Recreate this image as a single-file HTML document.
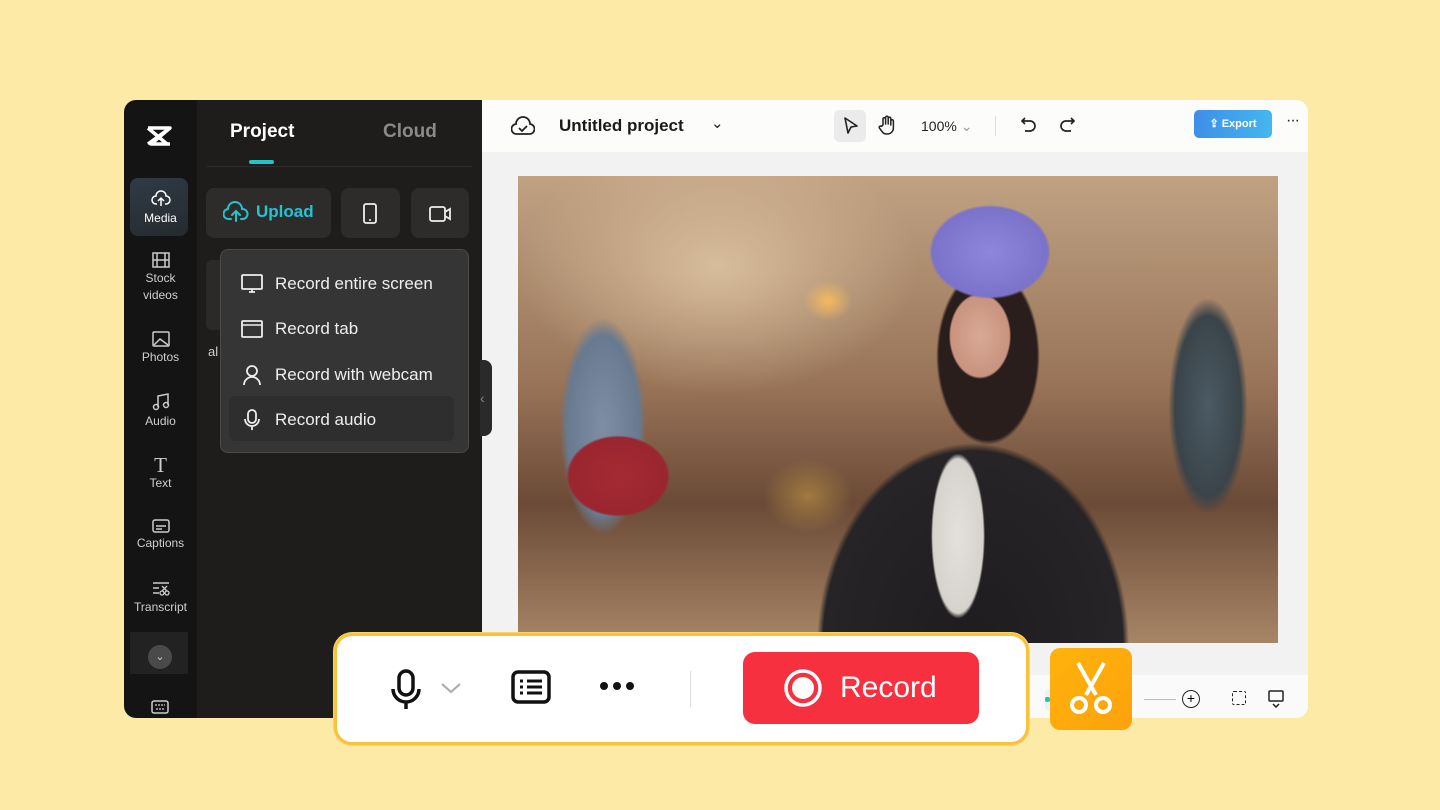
<!DOCTYPE html>
<html><head><meta charset="utf-8"><style>
*{box-sizing:border-box;margin:0;padding:0}
body{width:1440px;height:810px;background:#fdeaa7;font-family:"Liberation Sans",sans-serif;position:relative;overflow:hidden}
.abs{position:absolute}
.win{left:124px;top:100px;width:1184px;height:618px;border-radius:12px;overflow:hidden;background:#f2f2f2;z-index:0}
.rail{left:0;top:0;width:73px;height:618px;background:#141414;z-index:2}
.panel{left:73px;top:0;width:285px;height:618px;background:#1e1d1c;z-index:2}
.ri{position:absolute;left:0;width:73px;text-align:center;color:#cfcfcf;font-size:12px;line-height:17px}
.ri svg{display:block;margin:0 auto 2px}
.menu{left:96px;top:149px;width:249px;height:204px;background:#363535;border:1px solid #4a4a4a;border-radius:8px;z-index:3}
.mi{position:absolute;left:20px;color:#eee;font-size:17px;display:flex;align-items:center;gap:12px}
.btn{position:absolute;top:88px;height:50px;background:#2d2c2b;border-radius:8px}
.top{left:358px;top:0;width:826px;height:52px;background:#fcfcfb}
.photo{left:394px;top:76px;width:760px;height:467px;overflow:hidden;
background:
radial-gradient(ellipse 80px 62px at 472px 76px,#8c86dc 0,#7b73c9 72%,transparent 76%),
radial-gradient(ellipse 42px 58px at 462px 160px,#d9a995 0,#c8937f 70%,transparent 74%),
radial-gradient(ellipse 70px 120px at 470px 180px,#2a1e1c 0,#2a1e1c 70%,transparent 74%),
radial-gradient(ellipse 36px 110px at 440px 360px,#e4e0db 0,#d6d2cc 70%,transparent 75%),
radial-gradient(ellipse 200px 260px at 455px 470px,#1e1c1e 0,#262426 75%,transparent 78%),
radial-gradient(ellipse 70px 55px at 100px 300px,#a42a32 0,#9a2630 70%,transparent 74%),
radial-gradient(ellipse 60px 150px at 85px 250px,#7d8ea5 0,#687a90 60%,transparent 72%),
radial-gradient(ellipse 55px 150px at 690px 230px,#4b5a64 0,#3a444a 60%,transparent 72%),
radial-gradient(ellipse 60px 50px at 290px 320px,#a07a40 0,transparent 75%),
radial-gradient(ellipse 30px 25px at 310px 125px,#f4b95c 0,transparent 80%),
radial-gradient(ellipse 250px 160px at 200px 90px,#d7bd9c 0,transparent 80%),
linear-gradient(180deg,#c0a283 0%,#987357 45%,#6b4a37 70%,#a78566 100%)}
.bar{left:334px;top:633px;width:695px;height:112px;background:#fff;border:3px solid #f9c23c;border-radius:18px;box-shadow:0 0 0 1px #fbd56a;z-index:5}
</style></head><body>
<div class="abs win">
 <div class="abs rail">
  <svg class="abs" style="left:21px;top:24px" width="28" height="24" viewBox="0 0 28 24"><path d="M3 4h22L6 20h19M3 4l19 16M25 4L3 20" stroke="#fff" stroke-width="3.5" fill="none" stroke-linejoin="round"/></svg>
  <div class="abs" style="left:6px;top:78px;width:58px;height:58px;border-radius:8px;background:linear-gradient(160deg,#2f3b46,#262a2e)"></div>
  <div class="ri" style="top:90px;color:#fff"><svg width="20" height="18" viewBox="0 0 20 18"><path d="M6 14H5a4 4 0 0 1 0-8 5 5 0 0 1 10 0 4 4 0 0 1 0 8h-1M10 16V8M7 11l3-3 3 3" stroke="#fff" stroke-width="1.5" fill="none"/></svg>Media</div>
  <div class="ri" style="top:152px"><svg width="18" height="16"><rect x="1" y="1" width="16" height="14" stroke="#ccc" stroke-width="1.5" fill="none"/><path d="M5 1v14M13 1v14M1 8h16" stroke="#ccc" stroke-width="1.5"/></svg>Stock<br>videos</div>
  <div class="ri" style="top:231px"><svg width="18" height="16"><rect x="1" y="1" width="16" height="14" rx="1" stroke="#ccc" stroke-width="1.5" fill="none"/><path d="M2 14l6-6 8 6" stroke="#ccc" stroke-width="1.5" fill="none"/></svg>Photos</div>
  <div class="ri" style="top:293px"><svg width="18" height="18"><path d="M6 14V3l10-2v11" stroke="#ccc" stroke-width="1.5" fill="none"/><circle cx="4" cy="14" r="2.5" stroke="#ccc" stroke-width="1.5" fill="none"/><circle cx="14" cy="12" r="2.5" stroke="#ccc" stroke-width="1.5" fill="none"/></svg>Audio</div>
  <div class="ri" style="top:355px"><span style="font-family:'Liberation Serif';font-size:21px;display:block;line-height:20px">T</span>Text</div>
  <div class="ri" style="top:419px"><svg width="18" height="14"><rect x="1" y="1" width="16" height="12" rx="2" stroke="#ccc" stroke-width="1.5" fill="none"/><path d="M4 7h10M4 10h6" stroke="#ccc" stroke-width="1.5"/></svg>Captions</div>
  <div class="ri" style="top:481px"><svg width="18" height="16"><path d="M1 2h16M1 7h6M1 12h6" stroke="#ccc" stroke-width="1.5"/><circle cx="10" cy="12" r="2" stroke="#ccc" fill="none" stroke-width="1.3"/><circle cx="15" cy="12" r="2" stroke="#ccc" fill="none" stroke-width="1.3"/><path d="M10 5l5 5M15 5l-5 5" stroke="#ccc" stroke-width="1.3"/></svg>Transcript</div>
  <div class="abs" style="left:6px;top:532px;width:58px;height:42px;background:#222"></div>
  <div class="abs" style="left:24px;top:545px;width:24px;height:24px;border-radius:50%;background:#4a4a4a;color:#ccc;font-size:11px;text-align:center;line-height:24px">⌄</div>
  <svg class="abs" style="left:27px;top:600px" width="18" height="14"><rect x="1" y="1" width="16" height="12" rx="2" stroke="#ccc" stroke-width="1.5" fill="none"/><path d="M4 5h10M5 9h8" stroke="#ccc" stroke-width="1.3" stroke-dasharray="2 1"/></svg>
 </div>
 <div class="abs panel">
  <div class="abs" style="left:33px;top:21px;color:#fff;font-weight:bold;font-size:19px">Project</div>
  <div class="abs" style="left:186px;top:21px;color:#8a8a8a;font-weight:bold;font-size:19px">Cloud</div>
  <div class="abs" style="left:52px;top:60px;width:25px;height:4px;border-radius:2px;background:#22c4c9"></div>
  <div class="abs" style="left:10px;top:66px;width:265px;height:1px;background:#2e2e2e"></div>
  <div class="btn" style="left:9px;width:125px"><div style="display:flex;align-items:center;gap:7px;color:#24c3d1;font-weight:bold;font-size:17px;padding:13px 0 0 17px"><svg width="26" height="22" viewBox="0 0 26 22"><path d="M8 18H6a5 5 0 0 1-1-10 7 7 0 0 1 14 0 5 5 0 0 1 1 10h-2M13 20V11M9 14l4-4 4 4" stroke="#24c3d1" stroke-width="2" fill="none" stroke-linecap="round"/></svg>Upload</div></div>
  <div class="btn" style="left:144px;width:59px"><svg style="margin:15px 0 0 21px" width="16" height="22"><rect x="2" y="1" width="12" height="19" rx="2" stroke="#eee" stroke-width="1.8" fill="none"/><circle cx="8" cy="17" r="1" fill="#eee"/></svg></div>
  <div class="btn" style="left:214px;width:58px"><svg style="margin:17px 0 0 17px" width="26" height="18"><rect x="2" y="2" width="15" height="14" rx="2" stroke="#eee" stroke-width="1.8" fill="none"/><path d="M17 7l5-3v10l-5-3" stroke="#eee" stroke-width="1.8" fill="none"/></svg></div>
  <div class="abs" style="left:9px;top:160px;width:20px;height:70px;background:#2b2a29;border-radius:6px"></div>
  <div class="abs" style="left:11px;top:244px;color:#ccc;font-size:13px">al</div>
 </div>
 <div class="abs menu">
  <div class="mi" style="top:24px"><svg width="22" height="20"><rect x="1" y="1" width="20" height="14" rx="1" stroke="#eee" stroke-width="1.8" fill="none"/><path d="M8 18h6M11 15v3" stroke="#eee" stroke-width="1.8"/></svg>Record entire screen</div>
  <div class="mi" style="top:69px"><svg width="22" height="18"><rect x="1" y="1" width="20" height="16" rx="1" stroke="#eee" stroke-width="1.8" fill="none"/><path d="M1 5h20" stroke="#eee" stroke-width="1.5"/></svg>Record tab</div>
  <div class="mi" style="top:114px"><svg width="22" height="22"><circle cx="11" cy="7" r="5" stroke="#eee" stroke-width="1.8" fill="none"/><path d="M3 21a8 8 0 0 1 16 0" stroke="#eee" stroke-width="1.8" fill="none"/></svg>Record with webcam</div>
  <div class="abs" style="left:8px;top:146px;width:225px;height:45px;background:#2f2e2e;border-radius:6px"></div>
  <div class="mi" style="top:159px"><svg width="22" height="22"><rect x="7" y="1" width="8" height="13" rx="4" stroke="#eee" stroke-width="1.8" fill="none"/><path d="M4 10a7 7 0 0 0 14 0M11 17v4" stroke="#eee" stroke-width="1.8" fill="none"/></svg>Record audio</div>
 </div>
 <div class="abs" style="left:356px;top:260px;width:12px;height:76px;background:#2a2a2a;border-radius:0 8px 8px 0;color:#888;font-size:14px;line-height:76px;z-index:2">‹</div>
 <div class="abs top">
  <svg class="abs" style="left:29px;top:15px" width="24" height="22"><path d="M7 19H6a5 5 0 0 1-1-10 7 7 0 0 1 14 0 5 5 0 0 1-1 10z" stroke="#222" stroke-width="1.8" fill="none"/><path d="M8 13l3 3 5-5" stroke="#222" stroke-width="1.8" fill="none"/></svg>
  <div class="abs" style="left:77px;top:16px;font-weight:bold;font-size:17px;color:#1a1a1a">Untitled project</div>
  <div class="abs" style="left:229px;top:14px;font-size:15px;color:#222">⌄</div>
  <div class="abs" style="left:352px;top:10px;width:32px;height:32px;border-radius:5px;background:#ebebeb"></div>
  <svg class="abs" style="left:361px;top:17px" width="16" height="18"><path d="M2 1l12 8-6 1-3 6z" stroke="#222" stroke-width="1.6" fill="none" stroke-linejoin="round"/></svg>
  <svg class="abs" style="left:396px;top:15px" width="18" height="20" viewBox="0 0 18 20"><path d="M5 10V4a1.3 1.3 0 0 1 2.6 0v5V2.5a1.3 1.3 0 0 1 2.6 0V9V3.5a1.3 1.3 0 0 1 2.6 0V10V6a1.3 1.3 0 0 1 2.6 0v7a6 6 0 0 1-6 6h-1a5 5 0 0 1-4-2l-3-4a1.3 1.3 0 0 1 2-1.6z" stroke="#222" stroke-width="1.5" fill="none" stroke-linejoin="round"/></svg>
  <div class="abs" style="left:439px;top:18px;font-size:14px;color:#222">100% <span style="color:#999">⌄</span></div>
  <div class="abs" style="left:513px;top:16px;width:1px;height:20px;background:#ddd"></div>
  <svg class="abs" style="left:538px;top:16px" width="18" height="18"><path d="M5 2L2 5l3 3M2 5h8a5 5 0 0 1 0 10H5" stroke="#222" stroke-width="1.7" fill="none"/></svg>
  <svg class="abs" style="left:576px;top:16px" width="18" height="18"><path d="M13 2l3 3-3 3M16 5H8a5 5 0 0 0 0 10h5" stroke="#222" stroke-width="1.7" fill="none"/></svg>
  <div class="abs" style="left:712px;top:10px;width:78px;height:28px;border-radius:5px;background:linear-gradient(90deg,#3e8ee8,#44b7ee);color:#fff;font-size:11px;font-weight:bold;text-align:center;line-height:28px">⇪ Export</div>
  <div class="abs" style="left:804px;top:12px;font-size:16px;color:#222;letter-spacing:-1px">···</div>
 </div>
 <div class="abs photo"></div>
 <div class="abs" style="left:358px;top:575px;width:826px;height:43px;background:#fafafa"></div>
 <div class="abs" style="left:921px;top:589px;width:12px;height:22px;background:#e6f4f3;border-radius:4px"></div>
 <div class="abs" style="left:921px;top:597px;width:5px;height:5px;background:#22c4b9;border-radius:2px"></div>
 <div class="abs" style="left:1020px;top:599px;width:32px;height:1px;background:#bbb"></div>
 <div class="abs" style="left:1058px;top:590px;width:18px;height:18px;border:1.6px solid #222;border-radius:50%;text-align:center;font-size:14px;line-height:14px">+</div>
 <div class="abs" style="left:1108px;top:591px;width:14px;height:14px;border:1.6px dashed #222;border-radius:2px"></div>
 <svg class="abs" style="left:1144px;top:590px" width="16" height="18"><rect x="1" y="1" width="14" height="10" rx="1" stroke="#222" stroke-width="1.5" fill="none"/><path d="M5 14l3 3 3-3" stroke="#222" stroke-width="1.5" fill="none"/></svg>
</div>
<div class="abs bar">
 <svg class="abs" style="left:52px;top:33px" width="34" height="42"><rect x="10" y="2" width="14" height="24" rx="7" stroke="#111" stroke-width="3.5" fill="none"/><path d="M4 20a13 13 0 0 0 26 0M17 33v7" stroke="#111" stroke-width="3.5" fill="none"/></svg>
 <svg class="abs" style="left:103px;top:46px" width="22" height="12"><path d="M2 2l9 8 9-8" stroke="#aaa" stroke-width="2" fill="none"/></svg>
 <svg class="abs" style="left:174px;top:34px" width="40" height="34"><rect x="2" y="2" width="36" height="30" rx="5" stroke="#111" stroke-width="3.5" fill="none"/><path d="M9 11h3M16 11h15M9 17h3M16 17h15M9 23h3M16 23h15" stroke="#111" stroke-width="3"/></svg>
 <div class="abs" style="left:263px;top:46px;display:flex;gap:5px"><i style="width:8px;height:8px;border-radius:50%;background:#111"></i><i style="width:8px;height:8px;border-radius:50%;background:#111"></i><i style="width:8px;height:8px;border-radius:50%;background:#111"></i></div>
 <div class="abs" style="left:353px;top:35px;width:1px;height:36px;background:#ddd"></div>
 <div class="abs" style="left:406px;top:16px;width:236px;height:72px;border-radius:12px;background:#f7303f;color:#fff;font-size:30px;display:flex;align-items:center;padding-left:40px;gap:17px"><svg width="40" height="40"><circle cx="20" cy="20" r="17" stroke="#fff" stroke-width="3.5" fill="none"/><circle cx="20" cy="20" r="11" fill="#fff"/></svg>Record</div>
</div>
<div class="abs" style="left:1050px;top:648px;width:82px;height:82px;border-radius:10px;background:linear-gradient(135deg,#ffb30c,#fca20c);z-index:5">
 <svg style="margin:13px 0 0 18px" width="46" height="56"><path d="M10 2l18 32M36 2L18 34" stroke="#fff" stroke-width="4"/><circle cx="11" cy="44" r="7" stroke="#fff" stroke-width="4" fill="none"/><circle cx="35" cy="44" r="7" stroke="#fff" stroke-width="4" fill="none"/></svg>
</div>
</body></html>
